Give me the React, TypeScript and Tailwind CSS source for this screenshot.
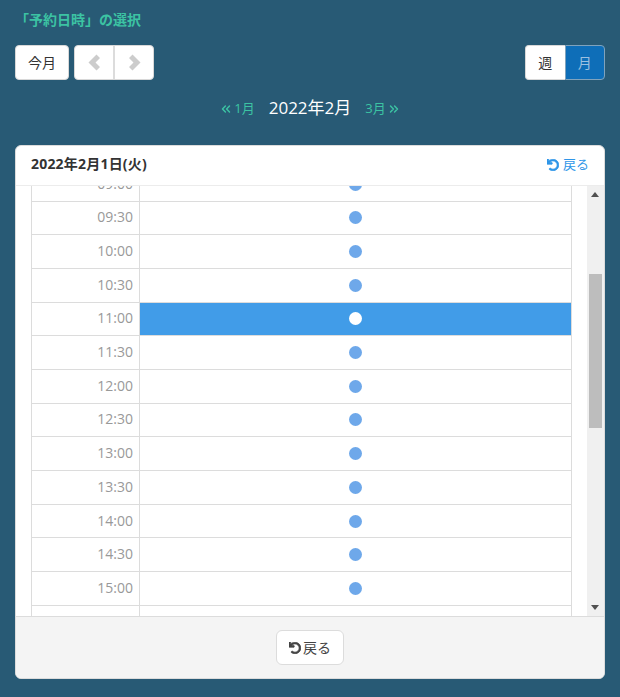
import { ChevronsLeft, ChevronsRight } from "lucide-react";
import { FaUndo } from "react-icons/fa";

const times = ["09:00", "09:30", "10:00", "10:30", "11:00", "11:30", "12:00", "12:30", "13:00", "13:30", "14:00", "14:30", "15:00", "15:30"];
const selected = "11:00";

const Chevron = ({ flip }: { flip?: boolean }) => (
  <svg width="13" height="17" viewBox="0 0 13 17" className={flip ? "rotate-180" : ""}>
    <path d="M8.500 0.500 0.500 8.500l8 8 3.500-3.500L7.500 8.500 12 4z" fill="currentColor" />
  </svg>
);

export default function App() {
  return (
    <div className="w-[620px] h-[697px] overflow-hidden bg-[#285a75] px-[15px] font-['Open_Sans','Noto_Sans_CJK_JP',sans-serif]">
      <h2 className="pt-[12px] h-[45px] text-[14px] leading-[16px] font-bold text-[#3cc3a3]">「予約日時」の選択</h2>

      <div className="flex justify-between h-[35px]">
        <div className="flex gap-[5px]">
          <button className="w-[54px] h-[35px] rounded bg-white border border-[#d8d8d8] text-[14px] text-[#333]">今月</button>
          <div className="flex w-[80px] h-[35px] rounded bg-white border border-[#d8d8d8] text-[#cccccc]">
            <span className="flex-1 flex items-center justify-center border-r-2 border-[#dcdcdc]"><Chevron /></span>
            <span className="flex-1 flex items-center justify-center"><Chevron flip /></span>
          </div>
        </div>
        <div className="flex w-[80px] h-[35px] text-[14px]">
          <button className="flex-1 rounded-l bg-white border border-[#d8d8d8] border-r-0 text-[#333]">週</button>
          <button className="flex-1 rounded-r bg-[#0e6eb8] border border-[#7fa3bd] text-[#9cc0e0]">月</button>
        </div>
      </div>

      <div className="flex items-center justify-center h-[55px] pt-[1px] mb-[10px]">
        <a className="flex items-center text-[13px] text-[#3cc3a3] pt-[2px]"><ChevronsLeft size={14} strokeWidth={2.5} className="mr-[1px] -ml-[2px]" />1月</a>
        <span className="mx-[14px] text-[17px] text-white">2022年2月</span>
        <a className="flex items-center text-[13px] text-[#3cc3a3] pt-[2px]">3月<ChevronsRight size={14} strokeWidth={2.5} className="ml-[1px] -mr-[2px]" /></a>
      </div>

      <div className="h-[534px] flex flex-col rounded-md overflow-hidden bg-white border border-[#dcdcdc]">
        <div className="h-[40px] shrink-0 flex items-center justify-between px-[15px] border-b border-[#ececec]">
          <span className="text-[14px] font-bold tracking-[0.2px] text-[#333] pb-[4px]">2022年2月1日(火)</span>
          <a className="flex items-center text-[13px] text-[#2f96e8] pb-[2px]"><FaUndo className="text-[12px] mr-[4px]" stroke="currentColor" strokeWidth={30} />戻る</a>
        </div>

        <div className="flex h-[430px] shrink-0">
          <div className="flex-1 overflow-hidden px-[15px]">
            <div className="-mt-[18.2px] border-x border-[#dcdcdc]">
              {times.map((t) => (
                <div key={t} className="flex h-[33.7px] border-b border-[#dcdcdc]">
                  <div className="w-[108px] shrink-0 flex items-center justify-end pr-[6px] pb-[2px] border-r border-[#dcdcdc] text-[14px] text-[#999]">{t}</div>
                  <div className={`flex-1 flex items-center justify-center ${t === selected ? "bg-[#419ce8]" : ""}`}>
                    <span className={`w-[13px] h-[13px] rounded-full ${t === selected ? "bg-white" : "bg-[#6ea8ea]"}`} />
                  </div>
                </div>
              ))}
            </div>
          </div>
          {/* scrollbar */}
          <div className="relative w-[17px] shrink-0 bg-[#f0f0f0]">
            <svg className="absolute left-[4px] top-[6px]" width="8" height="5" viewBox="0 0 8 5"><path d="M4 0 8 5H0z" fill="#505050" /></svg>
            <div className="absolute left-[2px] top-[88px] w-[13px] h-[154px] bg-[#bdbdbd]" />
            <svg className="absolute left-[4px] bottom-[6px]" width="8" height="5" viewBox="0 0 8 5"><path d="M0 0h8L4 5z" fill="#505050" /></svg>
          </div>
        </div>

        <div className="flex-1 flex items-center justify-center bg-[#f4f4f4] border-t border-[#dcdcdc]">
          <button className="flex items-center justify-center w-[68px] h-[35px] rounded-md bg-white border border-[#dcdcdc] text-[14px] text-[#444]"><FaUndo className="text-[12px] mr-[2px]" stroke="currentColor" strokeWidth={30} />戻る</button>
        </div>
      </div>
    </div>
  );
}
